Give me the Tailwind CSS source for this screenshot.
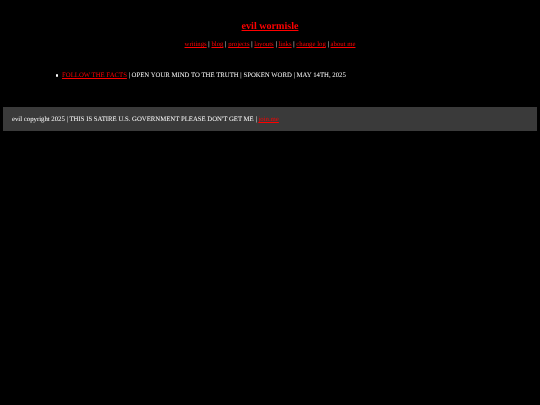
<!DOCTYPE html>
<html>
<head>
<meta charset="utf-8">
<script src="https://cdn.jsdelivr.net/npm/@tailwindcss/browser@4"></script>
</head>
<body class="bg-black text-white font-['Liberation_Serif',serif] text-[6.75px] [text-rendering:geometricPrecision] h-[405px] overflow-hidden">
<div class="p-[3px]">
<header class="text-center pt-[17px] blur-[0.25px]">
<h1 class="text-[10.1px] font-bold leading-[14px]"><a href="#" class="text-[#ff0000] underline">evil wormisle</a></h1>
<nav class="mt-[6px] leading-[10px]"><a href="#" class="text-[#ff0000] underline">writings</a> | <a href="#" class="text-[#ff0000] underline">blog</a> | <a href="#" class="text-[#ff0000] underline">projects</a> | <a href="#" class="text-[#ff0000] underline">layouts</a> | <a href="#" class="text-[#ff0000] underline">links</a> | <a href="#" class="text-[#ff0000] underline">change log</a> | <a href="#" class="text-[#ff0000] underline">about me</a></nav>
</header>
<ul class="mt-[21px] pl-[52px] leading-[10px] blur-[0.25px]">
<li class="flex items-center gap-[4px]"><span class="w-[2.5px] h-[2.5px] rounded-full bg-white mb-[1px] ml-[0.5px]"></span><span><a href="#" class="text-[#ff0000] underline">FOLLOW THE FACTS</a> | OPEN YOUR MIND TO THE TRUTH | SPOKEN WORD | MAY 14TH, 2025</span></li>
</ul>
<footer class="mt-[26px] bg-[#3a3a3a] h-[24px] px-[9px] pt-[2px] flex items-center">
<p class="blur-[0.25px]">evil copyright 2025 | THIS IS SATIRE U.S. GOVERNMENT PLEASE DON'T GET ME | <a href="#" class="text-[#ff0000] underline">join.me</a></p>
</footer>
</div>
</body>
</html>
